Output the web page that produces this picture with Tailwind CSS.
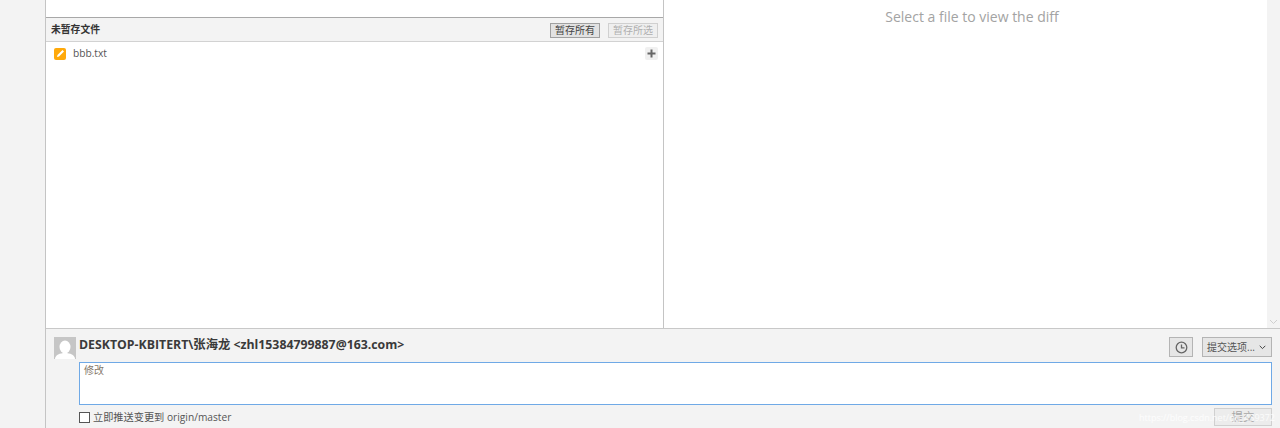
<!DOCTYPE html>
<html lang="zh">
<head>
    <meta charset="UTF-8">
    <title>SourceTree</title>
    <script src="https://cdn.jsdelivr.net/npm/@tailwindcss/browser@4"></script>
</head>
<body class="bg-[#f3f3f3] overflow-hidden font-['Open_Sans','Noto_Sans_CJK_SC',sans-serif]">
    <div class="flex h-[428px] w-[1280px]">
        <!-- Sidebar -->
        <div class="w-[45px] shrink-0 bg-[#f3f3f3]"></div>

        <div class="flex flex-col flex-1 min-w-0 border-l border-[#c4c4c4]">
            <div class="flex h-[329px] shrink-0 border-b border-[#c8c8c8]">
                <!-- File lists -->
                <div class="w-[618px] shrink-0 flex flex-col bg-white border-r border-[#c4c4c4]">
                    <div class="h-[18px] shrink-0 border-b border-[#a8a8a8]"></div>
                    <div class="h-[24px] shrink-0 flex items-center justify-between pl-[5px] pr-[5px] pt-[1px] bg-[#f3f3f3] border-b border-[#d2d2d2]">
                        <span class="text-[9.8px] font-bold text-[#333]">未暂存文件</span>
                        <div class="flex gap-[8px]">
                            <button class="w-[50px] h-[15px] flex items-center justify-center bg-[#e2e2e2] border border-[#a0a0a0] text-[10px] text-[#444]">暂存所有</button>
                            <button class="w-[50px] h-[15px] flex items-center justify-center bg-[#efefef] border border-[#d0d0d0] text-[10px] text-[#b0b0b0]">暂存所选</button>
                        </div>
                    </div>
                    <div class="flex items-center h-[23px] pl-[8px] pr-[5px]">
                        <span class="w-[12px] h-[12px] rounded-[2px] bg-[#ffa90a] flex items-center justify-center">
                            <svg width="9" height="9" viewBox="0 0 9 9"><path d="M1 8 L1.5 6 L6.5 1 L8 2.5 L3 7.5 Z" fill="#fff"/></svg>
                        </span>
                        <span class="ml-[7px] text-[10.2px] text-[#555]">bbb.txt</span>
                        <span class="ml-auto w-[13px] h-[13px] rounded-[2px] bg-[#f0f0f0] flex items-center justify-center">
                            <svg width="9" height="9" viewBox="0 0 9 9"><path d="M4.5 0.5V8.5M0.5 4.5H8.5" stroke="#666" stroke-width="2"/></svg>
                        </span>
                    </div>
                </div>
                <!-- Diff -->
                <div class="flex-1 bg-white text-center pl-[13px] pt-[7px] text-[14px] leading-[20px] text-[#a3a3a3]">Select a file to view the diff</div>
                <!-- Scrollbar -->
                <div class="w-[13px] shrink-0 bg-[#f3f3f3] flex flex-col justify-end items-center pb-[3px]">
                    <svg width="9" height="6" viewBox="0 0 9 6"><path d="M1 1L4.5 4.5L8 1" fill="none" stroke="#cfcfcf" stroke-width="1"/></svg>
                </div>
            </div>

            <!-- Commit area -->
            <div class="relative flex-1 bg-[#f3f3f3] pl-[8px] pr-[8px]">
                <div class="flex items-start pt-[8px] h-[33px]">
                    <div class="w-[22px] h-[22px] bg-[#c6c6c6] overflow-hidden shrink-0">
                        <svg width="22" height="22" viewBox="0 0 22 22"><ellipse cx="11" cy="10" rx="5.5" ry="6.5" fill="#fff"/><path d="M1 22C1 18 6 16 11 16S21 18 21 22Z" fill="#fff"/></svg>
                    </div>
                    <span class="ml-[3px] text-[12.3px] leading-[15px] font-bold text-[#3a3a3a]">DESKTOP-KBITERT\张海龙 &lt;zhl15384799887@163.com&gt;</span>
                    <button class="ml-auto w-[24px] h-[20px] flex items-center justify-center bg-[#e6e6e6] border border-[#b4b4b4]">
                        <svg width="13" height="13" viewBox="0 0 13 13" fill="none" stroke="#666" stroke-width="1.3"><circle cx="6.5" cy="6.5" r="5.3"/><path d="M6.5 3.5V6.8H9.5"/></svg>
                    </button>
                    <button class="ml-[9px] w-[70px] h-[20px] flex items-center justify-between pl-[4px] pr-[5px] pt-[1px] bg-[#e6e6e6] border border-[#b4b4b4] text-[10px] text-[#555]">
                        <span>提交选项...</span>
                        <svg width="7" height="5" viewBox="0 0 7 5"><path d="M0.7 0.8L3.5 3.6L6.3 0.8" fill="none" stroke="#444" stroke-width="1"/></svg>
                    </button>
                </div>
                <div class="ml-[25px] h-[43px] bg-white border border-[#6fa9e6] pl-[4px] text-[10px] leading-[14px] text-[#85786a]">修改</div>
                <div class="ml-[25px] mt-[3px] flex items-center justify-between h-[18px]">
                    <label class="flex items-center text-[10.2px] leading-[15px] text-[#555]">
                        <span class="w-[11px] h-[11px] border-[1.5px] border-[#555] bg-white"></span>
                        <span class="ml-[3px]">立即推送变更到 origin/master</span>
                    </label>
                    <button class="w-[58px] h-[18px] flex items-center justify-center bg-[#ececec] border border-[#d0d0d0] text-[11.5px] text-[#a8a8a8]">提交</button>
                </div>
                <!-- CSDN watermark -->
                <span class="absolute right-[5px] bottom-[4px] text-[9px] leading-[12px] text-white/80">https://blog.csdn.net/qq_439372</span>
            </div>
        </div>
    </div>
</body>
</html>
